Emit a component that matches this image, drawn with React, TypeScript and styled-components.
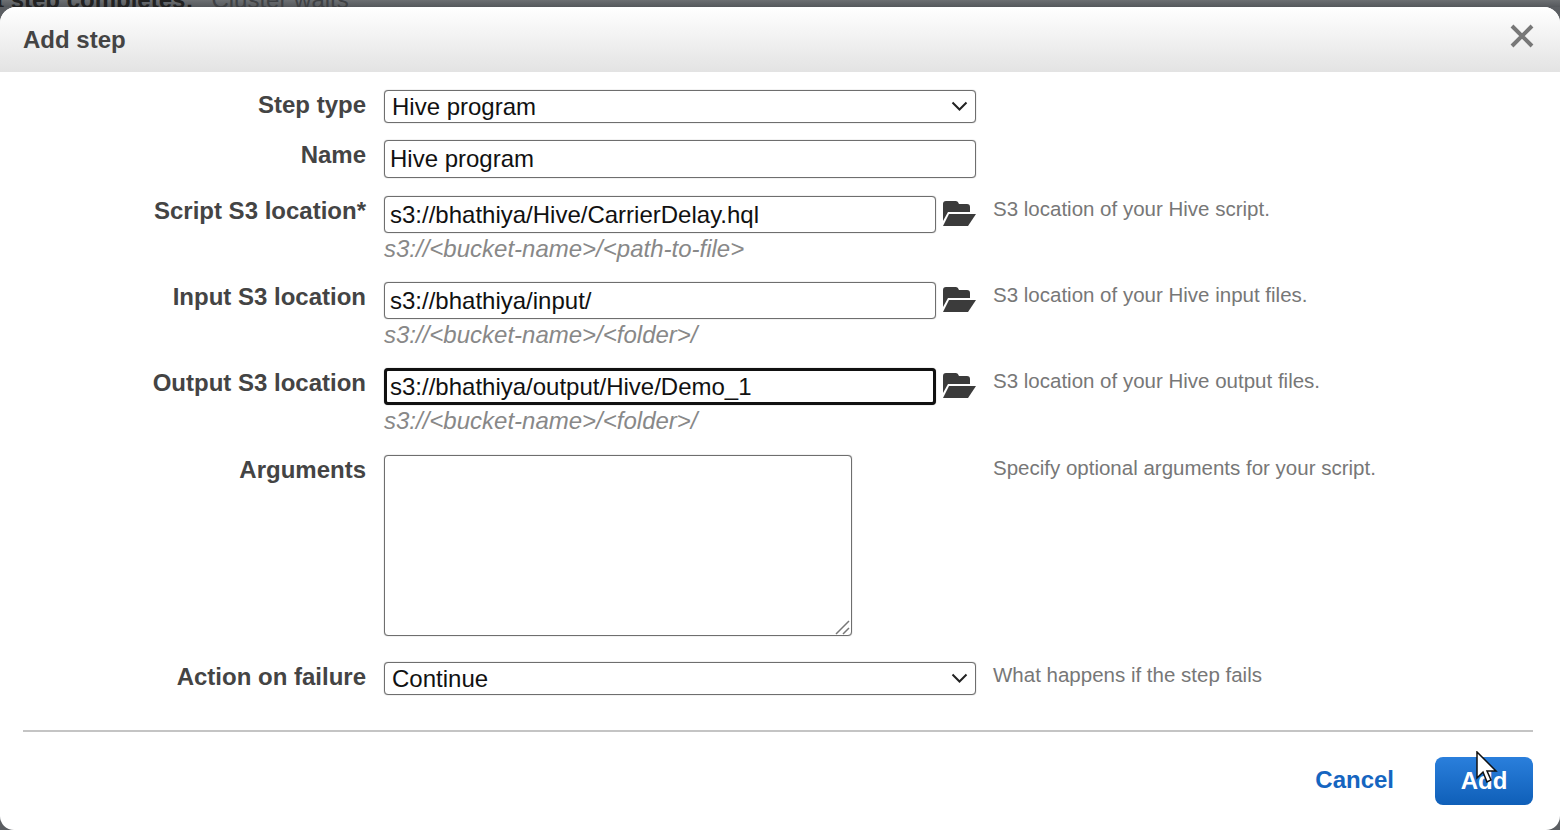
import React from 'react';
import styled, { createGlobalStyle } from 'styled-components';

const Global = createGlobalStyle`
  html, body {
    margin: 0;
    height: 830px;
    overflow: hidden;
    background: #5b5e62;
    font-family: "Liberation Sans", Arial, sans-serif;
  }
`;

const Backdrop = styled.div`
  height: 7px;
  overflow: hidden;
  background: linear-gradient(#6c6f72, #55585c);
`;

const BackdropText = styled.div`
  margin: -14px 0 0 -4px;
  font-size: 24px;
  line-height: 28px;
  white-space: nowrap;
  color: #3f4144;
`;

const BackdropStrong = styled.strong`
  margin-right: 18px;
  color: #222;
`;

const Modal = styled.div`
  width: 1560px;
  height: 823px;
  background: #fff;
  border-radius: 16px 16px 14px 14px;
  overflow: hidden;
  display: flex;
  flex-direction: column;
`;

const Header = styled.div`
  height: 65px;
  flex: none;
  box-sizing: border-box;
  padding: 0 26px 0 23px;
  display: flex;
  align-items: center;
  justify-content: space-between;
  background: linear-gradient(#ffffff, #e3e3e3);
`;

const Title = styled.div`
  font-size: 24px;
  font-weight: bold;
  color: #444;
`;

const CloseIcon = styled.svg`
  width: 24px;
  height: 24px;
  margin-top: -7px;
`;

const Form = styled.div`
  padding-top: 18px;
  display: flex;
  flex-direction: column;
`;

const Row = styled.div<{ $top?: number }>`
  display: grid;
  grid-template-columns: 366px 592px 1fr;
  column-gap: 18px;
  margin-top: ${p => p.$top ?? 0}px;
`;

const Label = styled.div`
  font-size: 24px;
  font-weight: bold;
  line-height: 30px;
  color: #444;
  text-align: right;
  white-space: nowrap;
`;

const FieldLine = styled.div`
  display: flex;
  align-items: center;
  justify-content: space-between;
`;

const SelectWrap = styled.div`
  position: relative;
  height: 33px;
`;

const Select = styled.select`
  display: block;
  appearance: none;
  width: 592px;
  height: 33px;
  box-sizing: border-box;
  border: 1px solid #6e6e6e;
  border-radius: 4px;
  box-shadow: 0 0 1px rgba(0, 0, 0, 0.5);
  background-color: #fff;
  font-family: "Liberation Sans", Arial, sans-serif;
  font-size: 24px;
  color: #111;
  padding: 0 7px;
  outline: none;
`;

const Chevron = styled.svg`
  position: absolute;
  right: 8px;
  top: 11px;
  width: 17px;
  height: 10px;
  pointer-events: none;
`;

const TextInput = styled.input<{ $w: number; $h: number; $focused?: boolean }>`
  width: ${p => p.$w}px;
  height: ${p => p.$h}px;
  box-sizing: border-box;
  border: ${p => (p.$focused ? '3px solid #111' : '1px solid #6e6e6e')};
  border-radius: 4px;
  box-shadow: 0 0 1px rgba(0, 0, 0, 0.5);
  padding: 0 ${p => (p.$focused ? 3 : 5)}px;
  outline: none;
  font-family: "Liberation Sans", Arial, sans-serif;
  font-size: 24px;
  color: #111;
`;

const Hint = styled.div`
  height: 33px;
  font-size: 24px;
  line-height: 31px;
  font-style: italic;
  color: #888;
  white-space: nowrap;
`;

const Help = styled.div`
  margin-left: -1px;
  font-size: 20.5px;
  line-height: 26px;
  color: #777;
  white-space: nowrap;
`;

const FolderIcon = styled.svg`
  width: 34px;
  height: 25px;
  flex: none;
  margin-bottom: 3px;
`;

const AreaWrap = styled.div`
  position: relative;
  width: 468px;
  height: 181px;
`;

const TextArea = styled.textarea`
  display: block;
  width: 468px;
  height: 181px;
  box-sizing: border-box;
  border: 1px solid #6e6e6e;
  border-radius: 4px;
  box-shadow: 0 0 1px rgba(0, 0, 0, 0.5);
  outline: none;
  resize: none;
`;

const Grip = styled.svg`
  position: absolute;
  right: 2px;
  bottom: 1px;
  width: 15px;
  height: 15px;
`;

const Divider = styled.hr`
  margin: 35px 27px 0 23px;
  border: none;
  height: 2px;
  background: #c4c4c4;
`;

const Footer = styled.div`
  margin-top: 25px;
  padding-right: 27px;
  display: flex;
  justify-content: flex-end;
  align-items: center;
  gap: 41px;
`;

const CancelLink = styled.a`
  margin-bottom: 3px;
  font-size: 24px;
  font-weight: bold;
  color: #1565c0;
`;

const AddButton = styled.div`
  position: relative;
  width: 98px;
  height: 48px;
  border-radius: 8px;
  background: linear-gradient(#2a7fdc, #0f5fb8);
  color: #fff;
  font-size: 24px;
  font-weight: bold;
  display: flex;
  align-items: center;
  justify-content: center;
`;

const Cursor = styled.svg`
  position: absolute;
  left: 40px;
  top: -6px;
  width: 24px;
  height: 36px;
`;

const Folder = () => (
  <FolderIcon viewBox="0 0 34 25">
    <path d="M1 3 Q1 0 4 0 H14 Q16 0 17 3 H25 Q28 3 28 6 V11 H6 L1 20 Z" fill="#3b3b3b" />
    <path d="M7 13 H34 L26 25 H1 Z" fill="#3b3b3b" />
  </FolderIcon>
);

const ChevronDown = () => (
  <Chevron viewBox="0 0 17 10">
    <path d="M1.5 1.5 L8.5 8.5 L15.5 1.5" fill="none" stroke="#222" strokeWidth="2" />
  </Chevron>
);

const Dropdown = ({ value }: { value: string }) => (
  <SelectWrap>
    <Select defaultValue={value}>
      <option>{value}</option>
    </Select>
    <ChevronDown />
  </SelectWrap>
);

const Field = ({ value, hint, focused }: { value: string; hint: string; focused?: boolean }) => (
  <div>
    <FieldLine>
      <TextInput $w={552} $h={37} $focused={focused} value={value} readOnly />
      <Folder />
    </FieldLine>
    <Hint>{hint}</Hint>
  </div>
);

export default function App() {
  return (
    <>
      <Global />
      <Backdrop>
        <BackdropText>
          <BackdropStrong>t step completes:</BackdropStrong>Cluster waits
        </BackdropText>
      </Backdrop>
      <Modal>
        <Header>
          <Title>Add step</Title>
          <CloseIcon viewBox="0 0 24 24">
            <path d="M2 2 L22 22 M22 2 L2 22" stroke="#777" strokeWidth="4" fill="none" />
          </CloseIcon>
        </Header>
        <Form>
          <Row>
            <Label>Step type</Label>
            <Dropdown value="Hive program" />
          </Row>
          <Row $top={17}>
            <Label>Name</Label>
            <TextInput $w={592} $h={38} value="Hive program" readOnly />
          </Row>
          <Row $top={18}>
            <Label>Script S3 location*</Label>
            <Field value="s3://bhathiya/Hive/CarrierDelay.hql" hint="s3://<bucket-name>/<path-to-file>" />
            <Help>S3 location of your Hive script.</Help>
          </Row>
          <Row $top={16}>
            <Label>Input S3 location</Label>
            <Field value="s3://bhathiya/input/" hint="s3://<bucket-name>/<folder>/" />
            <Help>S3 location of your Hive input files.</Help>
          </Row>
          <Row $top={16}>
            <Label>Output S3 location</Label>
            <Field value="s3://bhathiya/output/Hive/Demo_1" hint="s3://<bucket-name>/<folder>/" focused />
            <Help>S3 location of your Hive output files.</Help>
          </Row>
          <Row $top={17}>
            <Label>Arguments</Label>
            <AreaWrap>
              <TextArea />
              <Grip viewBox="0 0 15 15">
                <path d="M1 14 L14 1 M8 14 L14 8" stroke="#777" strokeWidth="1.5" fill="none" />
              </Grip>
            </AreaWrap>
            <Help>Specify optional arguments for your script.</Help>
          </Row>
          <Row $top={26}>
            <Label>Action on failure</Label>
            <Dropdown value="Continue" />
            <Help>What happens if the step fails</Help>
          </Row>
        </Form>
        <Divider />
        <Footer>
          <CancelLink>Cancel</CancelLink>
          <AddButton>
            Add
            <Cursor viewBox="0 0 24 36">
              <path d="M2 1 L2 27 L8 21 L12 31 L16 29 L12 20 L21 20 Z" fill="#fff" stroke="#111" strokeWidth="1.5" />
            </Cursor>
          </AddButton>
        </Footer>
      </Modal>
    </>
  );
}
